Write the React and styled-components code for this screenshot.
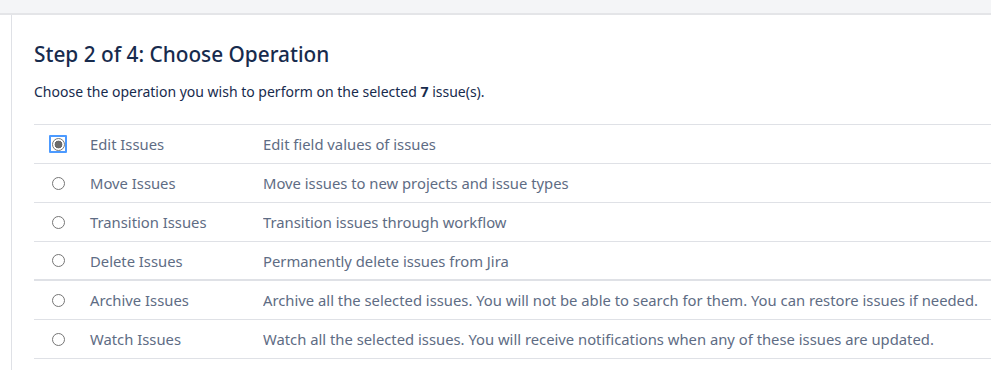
import React from 'react'
import styled, { createGlobalStyle } from 'styled-components'

const GlobalStyle = createGlobalStyle`
    body {
        margin     : 0;
        background : #fff;
        font-family: "Segoe UI", "Noto Sans", "Open Sans", sans-serif;
        color      : #172b4d;
        overflow   : hidden;
    }
`

const operations = [
    { name: 'Edit Issues', desc: 'Edit field values of issues' },
    { name: 'Move Issues', desc: 'Move issues to new projects and issue types' },
    { name: 'Transition Issues', desc: 'Transition issues through workflow' },
    { name: 'Delete Issues', desc: 'Permanently delete issues from Jira', thick: true },
    { name: 'Archive Issues', desc: 'Archive all the selected issues. You will not be able to search for them. You can restore issues if needed.' },
    { name: 'Watch Issues', desc: 'Watch all the selected issues. You will receive notifications when any of these issues are updated.' },
]

const App = () => {
    const [selected, setSelected] = React.useState(0)

    return (
        <>
            <GlobalStyle />
            <Page>
                <TopBar />
                <Body>
                    <Sidebar />
                    <Content>
                        <Title>Step 2 of 4: Choose Operation</Title>
                        <Intro>Choose the operation you wish to perform on the selected <strong>7</strong> issue(s).</Intro>
                        <Table>
                            {operations.map((op, i) => (
                                <Row key={op.name} $thick={op.thick}>
                                    <RadioCell>
                                        <RadioFocus $focused={selected === i}>
                                            <Radio $checked={selected === i} onClick={() => setSelected(i)} />
                                        </RadioFocus>
                                    </RadioCell>
                                    <Name>{op.name}</Name>
                                    <Desc>{op.desc}</Desc>
                                </Row>
                            ))}
                        </Table>
                    </Content>
                </Body>
            </Page>
        </>
    )
}

export default App

const Page = styled.div`
    width          : 991px;
    height         : 370px;
    display        : flex;
    flex-direction : column;
`

const TopBar = styled.div`
    height        : 13px;
    background    : #f4f5f7;
    border-bottom : 2px solid #e4e5e8;
    flex-shrink   : 0;
`

const Body = styled.div`
    flex    : 1;
    display : flex;
`

const Sidebar = styled.div`
    width        : 11px;
    border-right : 1px solid #dfe1e6;
    flex-shrink  : 0;
`

const Content = styled.div`
    flex    : 1;
    padding : 22px 0 0 22px;
`

const Title = styled.h2`
    margin      : 0;
    font-size   : 20.8px;
    font-weight : 500;
    line-height : 34px;
    color       : #172b4d;
`

const Intro = styled.p`
    margin      : 11px 0 0;
    font-size   : 14px;
    line-height : 20px;
    color       : #172b4d;

    strong {
        font-weight : 700;
    }
`

const Table = styled.div`
    margin-top : 22px;
    border-top : 1px solid #dfe1e6;
`

const Row = styled.div`
    display       : grid;
    grid-template-columns : 56px 173px 1fr;
    align-items   : center;
    height        : ${p => p.$thick ? 37 : 38}px;
    border-bottom : ${p => p.$thick ? 2 : 1}px solid #dfe1e6;
    font-size     : 14.8px;
    color         : #5e6c84;
    white-space   : nowrap;
`

const RadioCell = styled.div`
    display      : flex;
    padding-left : 15px;
`

const RadioFocus = styled.div`
    width           : 18px;
    height          : 18px;
    display         : flex;
    align-items     : center;
    justify-content : center;
    box-sizing      : border-box;
    border-radius   : 1px;
    border          : 2px solid ${p => p.$focused ? '#4c9aff' : 'transparent'};
`

const Radio = styled.span`
    width         : 13px;
    height        : 13px;
    box-sizing    : border-box;
    border-radius : 50%;
    border        : 1px solid #767676;
    background    : ${p => p.$checked ? 'radial-gradient(circle, #6b6b6b 0 3.6px, #fff 4.2px)' : '#fff'};
    cursor        : pointer;
`

const Name = styled.span``

const Desc = styled.span`
    overflow : hidden;
`
